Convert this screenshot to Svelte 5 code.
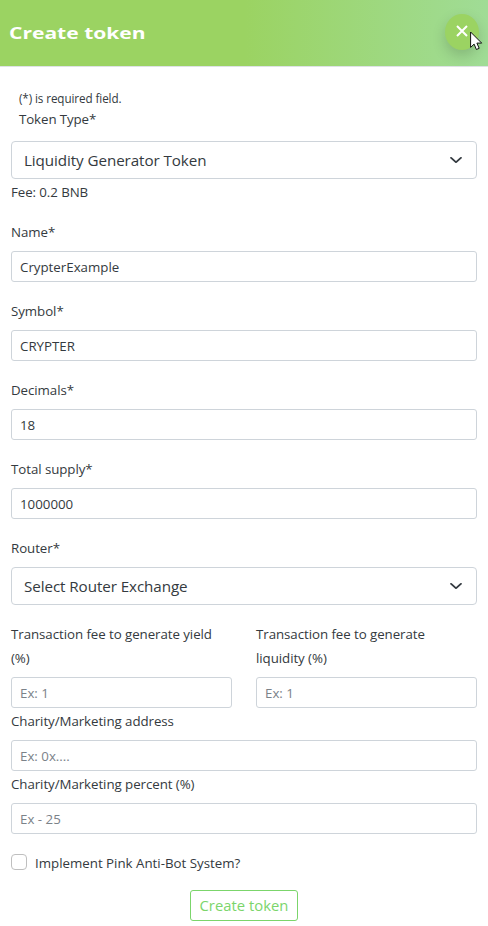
<script>
  let tokenType = $state('Liquidity Generator Token');
  let router = $state('Select Router Exchange');
  const fields = [
    { label: 'Name*', value: 'CrypterExample' },
    { label: 'Symbol*', value: 'CRYPTER' },
    { label: 'Decimals*', value: '18' },
    { label: 'Total supply*', value: '1000000' }
  ];
</script>

{#snippet select(value)}
  <div class="select" role="combobox" aria-expanded="false" aria-controls="none" tabindex="0">
    <span>{value}</span>
    <svg width="16" height="12" viewBox="0 0 16 16" preserveAspectRatio="none" fill="none" stroke="#343a40" stroke-width="2" stroke-linecap="round" stroke-linejoin="round"><path d="m3 5 5 6 5-6" /></svg>
  </div>
{/snippet}

<div class="panel">
  <header>
    <h5>Create token</h5>
    <button class="close" aria-label="Close">
      <svg width="12" height="12" viewBox="0 0 12 12" stroke="#fff" stroke-width="2" fill="none"><path d="m1 1 10 10M11 1 1 11" /></svg>
    </button>
    <svg class="cursor" width="13" height="20" viewBox="0 0 13 20"><path d="M.6 1v15.4l3.5-3.3 2.3 5.4 2.8-1.2-2.3-5.2h4.8z" fill="#fff" stroke="#111" stroke-width="1" /></svg>
  </header>

  <main>
    <div class="intro">
      <small>(*) is required field.</small>
      <span>Token Type*</span>
    </div>
    {@render select(tokenType)}
    <div class="fee">Fee: 0.2 BNB</div>

    {#each fields as field}
      <label class="group">
        <span class="label">{field.label}</span>
        <input value={field.value} />
      </label>
    {/each}

    <div class="group">
      <span class="label">Router*</span>
      {@render select(router)}
    </div>

    <div class="row">
      <label><span class="label">Transaction fee to generate yield<br />(%)</span><input placeholder="Ex: 1" /></label>
      <label><span class="label">Transaction fee to generate<br />liquidity (%)</span><input placeholder="Ex: 1" /></label>
    </div>
    <label><span class="label">Charity/Marketing address</span><input placeholder="Ex: 0x...." /></label>
    <label><span class="label">Charity/Marketing percent (%)</span><input placeholder="Ex - 25" /></label>

    <label class="check">
      <input type="checkbox" />
      <span>Implement Pink Anti-Bot System?</span>
    </label>
    <button class="submit"><span>Create token</span></button>
  </main>
</div>

<style>
  :global(body) { background: #fff; }
  * { box-sizing: border-box; }
  .panel {
    width: 488px;
    height: 926px;
    overflow: hidden;
    background: #fff;
    color: #343a40;
    font: 13.3px/24px "Open Sans", "Noto Sans", sans-serif;
  }
  header {
    position: relative;
    display: flex;
    align-items: center;
    justify-content: space-between;
    height: 67px;
    padding: 0 9px;
    border-bottom: 1px solid #dee2e6;
    background: linear-gradient(90deg, #9bd362 0, #9bd362 50%, #a0dc96 100%);
  }
  h5 {
    margin: -1px 0 0;
    color: #fff;
    font: 700 16px/24px "Open Sans", sans-serif;
    transform: scaleX(1.315);
    transform-origin: left;
  }
  .close {
    display: flex;
    align-items: center;
    justify-content: center;
    width: 34px;
    height: 36px;
    margin-top: -2px;
    padding: 0 0 2px;
    border: 0;
    border-radius: 50%;
    background: #9bd362;
    box-shadow: 0 6px 14px rgba(0, 0, 0, .17);
  }
  .cursor { position: absolute; left: 470px; top: 31px; }
  main { padding: 23px 11px 0; display: flex; flex-direction: column; }
  .intro { display: flex; flex-direction: column; padding-left: 8px; height: 51px; letter-spacing: -.1px; }
  small { font-size: 11.7px; line-height: 17px; letter-spacing: -.1px; }
  .label { display: block; padding-top: 1px; margin-bottom: 7px; letter-spacing: -.06px; }
  .select {
    display: flex;
    align-items: center;
    justify-content: space-between;
    height: 38px;
    padding: 0 12px;
    border: 1px solid #ced4da;
    border-radius: 4px;
    font-size: 15.2px;
    letter-spacing: -.08px;
  }
  .fee { height: 24px; margin-bottom: 16px; line-height: 26px; letter-spacing: -.08px; }
  .group { display: block; margin-bottom: 16px; }
  input {
    display: block;
    width: 100%;
    height: 31px;
    padding: 0 8px;
    border: 1px solid #ced4da;
    border-radius: 3px;
    background: #fff;
    color: #343a40;
    font: inherit;
    outline: 0;
  }
  input::placeholder { color: #7b8289; opacity: 1; }
  .row { display: grid; grid-template-columns: 1fr 1fr; gap: 24px; }
  .check { display: flex; align-items: center; gap: 8px; margin: 16px 0; height: 24px; }
  .check span { padding-top: 2px; }
  .check input {
    width: 16px;
    height: 16px;
    margin: 0;
    padding: 0;
    appearance: none;
    border: 1px solid #bfbfbf;
    border-radius: 4px;
  }
  .submit {
    align-self: center;
    width: 108px;
    height: 31px;
    padding: 0;
    border: 1px solid #7bd56b;
    border-radius: 3px;
    background: #fff;
    color: #7bd56b;
    font: 500 14px/27px "Open Sans", sans-serif;
  }
  .submit span { display: inline-block; transform: scaleX(1.06); }
</style>
